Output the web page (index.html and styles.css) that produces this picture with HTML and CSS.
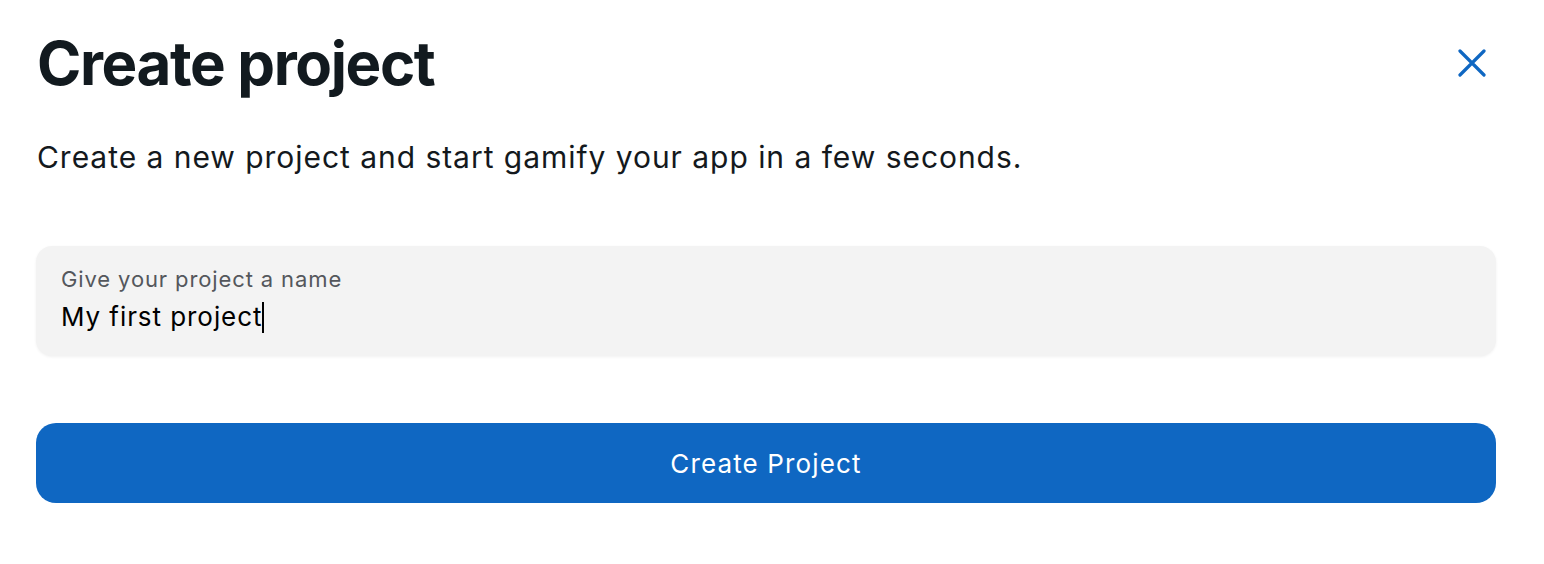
FILE: index.html
```html
<!DOCTYPE html>
<html lang="en">
	<head>
		<meta charset="UTF-8" />
		<meta name="viewport" content="width=device-width, initial-scale=1.0" />
		<title>Create project</title>
		<link rel="stylesheet" href="styles.css">
	</head>
	<body>
		<div class="dialog">
			<div class="dialog-header">
				<h1>Create project</h1>
				<button class="close-btn" aria-label="Close">
					<svg width="28" height="28" viewBox="0 0 28 28">
						<path d="M2 2 L26 26 M26 2 L2 26" stroke="currentColor" stroke-width="3.2" stroke-linecap="round" fill="none" />
					</svg>
				</button>
			</div>
			<p class="lead">Create a new project and start gamify your app in a few seconds.</p>

			<label class="field" for="projectName">
				<span class="field-label">Give your project a name</span>
				<span class="field-value">My first project<span class="caret"></span></span>
			</label>

			<button class="primary-btn">Create Project</button>
		</div>
	</body>
</html>
```

FILE: styles.css
```css
html,
body {
	width: 100%;
	height: 100%;
}

body {
	margin: 0;
	color: #121a1f;
	background: #fff;
	font-family: Inter, 'Noto Sans', sans-serif;
}

.dialog {
	padding: 27px 48px 0 36px;
}

.dialog-header {
	display: flex;
	align-items: center;
	justify-content: space-between;
}

h1 {
	margin: 0;
	font-size: 60px;
	line-height: 72px;
	font-weight: 700;
	letter-spacing: -0.023em;
	padding-left: 1px;
}

.close-btn {
	width: 48px;
	height: 48px;
	padding: 0;
	border: none;
	background: none;
	color: #0f67c2;
	display: flex;
	align-items: center;
	justify-content: center;
	cursor: pointer;
}

.lead {
	margin: 38px 0 0 1px;
	font-size: 30px;
	line-height: 40px;
	letter-spacing: 0.032em;
	color: #14191d;
}

.field {
	display: flex;
	flex-direction: column;
	margin-top: 69px;
	padding: 19px 25px 22px;
	background: #f3f3f3;
	border-radius: 16px;
	box-shadow: 0 1px 3px rgba(0, 0, 0, 0.06);
}

.field-label {
	font-size: 22px;
	line-height: 28px;
	letter-spacing: 0.04em;
	color: #54575c;
}

.field-value {
	margin-top: 7px;
	font-size: 26px;
	line-height: 34px;
	letter-spacing: 0.036em;
	color: #000;
	display: flex;
	align-items: center;
}

.caret {
	display: inline-block;
	width: 2px;
	height: 31px;
	background: #000;
}

.primary-btn {
	display: block;
	width: 100%;
	height: 80px;
	margin-top: 67px;
	border: none;
	border-radius: 20px;
	background: #0f67c2;
	color: #fff;
	font-family: inherit;
	font-size: 26px;
	letter-spacing: 0.044em;
	cursor: pointer;
}
```
